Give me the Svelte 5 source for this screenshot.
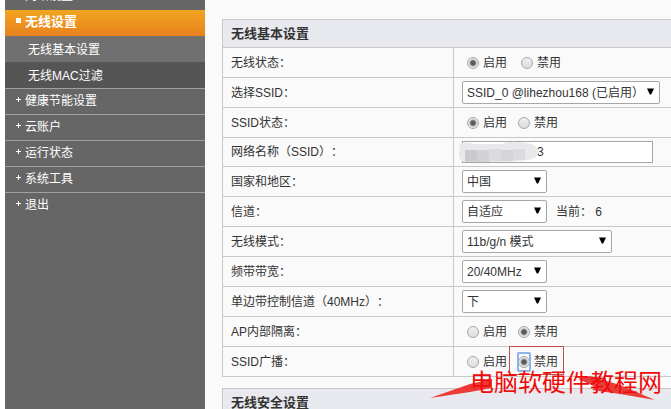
<script lang="ts">
  type Option = { label: string; on: boolean };

  interface Row {
    label: string;
    kind: "radio" | "select" | "text";
    name: string;
    value?: string;
    options?: Option[];
    width?: "short" | "medium" | "long";
    note?: string;
    spaced?: boolean;
    marked?: boolean;
  }

  const menu = ["健康节能设置", "云账户", "运行状态", "系统工具", "退出"];

  const onOff = (enabled: boolean): Option[] => [
    { label: "启用", on: enabled },
    { label: "禁用", on: !enabled },
  ];

  const rows: Row[] = [
    { label: "无线状态：", kind: "radio", name: "wifi", options: onOff(true), spaced: true },
    { label: "选择SSID：", kind: "select", name: "ssid", value: "SSID_0 @lihezhou168 (已启用）", width: "long" },
    { label: "SSID状态：", kind: "radio", name: "ssid-state", options: onOff(true) },
    { label: "网络名称（SSID）：", kind: "text", name: "ssid-name", value: "3" },
    { label: "国家和地区：", kind: "select", name: "country", value: "中国", width: "short" },
    { label: "信道：", kind: "select", name: "channel", value: "自适应", width: "short", note: "当前： 6" },
    { label: "无线模式：", kind: "select", name: "mode", value: "11b/g/n 模式", width: "medium" },
    { label: "频带带宽：", kind: "select", name: "bandwidth", value: "20/40MHz", width: "short" },
    { label: "单边带控制信道（40MHz）：", kind: "select", name: "sideband", value: "下", width: "short" },
    { label: "AP内部隔离：", kind: "radio", name: "isolation", options: onOff(false) },
    { label: "SSID广播：", kind: "radio", name: "broadcast", options: onOff(false), marked: true },
  ];
</script>

<div class="page">
  <nav class="sidebar">
    <ul class="menu">
      <li class="item item--first"><a href="#network"><span class="plus"></span>网络设置</a></li>
      <li class="item item--active"><a href="#wireless"><span class="square"></span>无线设置</a></li>
      <li class="sub sub--current"><a href="#basic">无线基本设置</a></li>
      <li class="sub"><a href="#mac">无线MAC过滤</a></li>
      {#each menu as entry}
        <li class="item"><a href="#menu"><span class="plus"></span>{entry}</a></li>
      {/each}
    </ul>
  </nav>

  <main class="content">
    <table class="settings">
      <thead>
        <tr><th colspan="2">无线基本设置</th></tr>
      </thead>
      <tbody>
        {#each rows as row}
          <tr class:row--text={row.kind === "text"}>
            <td class="name">
              {#if row.kind === "radio"}
                {row.label}
              {:else}
                <label for={row.name}>{row.label}</label>
              {/if}
            </td>
            <td class="value">
              <div class="field" class:field--radio={row.kind === "radio"} class:field--spaced={row.spaced}>
                {#if row.kind === "radio"}
                  {#each row.options ?? [] as option}
                    <label class="option">
                      <input type="radio" name={row.name} value={option.label} checked={option.on} />
                      {option.label}
                      {#if row.marked && option.on}
                        <span class="focus"></span>
                        <span class="frame"></span>
                      {/if}
                    </label>
                  {/each}
                {:else if row.kind === "select"}
                  <span class="select select--{row.width}">
                    <select id={row.name}>
                      <option>{row.value}</option>
                    </select>
                    <svg class="arrow" viewBox="0 0 7 7" aria-hidden="true"><path d="M0 0.5h7L4.2 6.5H2.8z" /></svg>
                  </span>
                  {#if row.note}
                    <span class="note">{row.note}</span>
                  {/if}
                {:else}
                  <span class="text">
                    <input type="text" id={row.name} value={row.value} />
                    <svg class="smudge" viewBox="0 0 82 22" aria-hidden="true">
                      <path fill="#e9e8ea" d="M2 3Q8 0 16 3L44 3Q50 0 60 1Q76 1 81 9Q80 18 70 19L50 21 8 21Q0 20 1 12z" />
                      <path fill="#d3d2d5" d="M7 9h24v12H7z" />
                      <path fill="#cac9cd" d="M7 9h12v11H7z" />
                      <path fill="#dcdbde" d="M31 8h12v12H31zM55 8h12v11H55z" />
                      <path fill="#d6d4d8" d="M43 9h12v11H43z" />
                    </svg>
                  </span>
                {/if}
                {#if row.marked}
                  <div class="watermark">
                    <svg class="strokes" viewBox="0 0 228 30" aria-hidden="true">
                      <path fill="#ee3a36" d="M0 26L40 12 62 7 62 16 40 20z" />
                      <path fill="#e83e3a" d="M148 7L160 4 190 13 225 28 190 22 162 18 166 15z" />
                    </svg>
                    <span class="mark">电脑软硬件教程网</span>
                  </div>
                {/if}
              </div>
            </td>
          </tr>
        {/each}
      </tbody>
    </table>

    <table class="settings">
      <thead>
        <tr><th colspan="2">无线安全设置</th></tr>
      </thead>
    </table>
  </main>
</div>

<style>
  :global(html) {
    height: 100%;
    overflow: hidden;
  }

  :global(body) {
    height: 100%;
    overflow: hidden;
    background: #fafafa;
  }

  .page,
  .page input,
  .page select {
    font-family: "Liberation Sans", "Noto Sans CJK SC", sans-serif;
    font-size: 12px;
    color: #333;
    text-spacing-trim: space-all;
  }

  .page {
    display: flex;
    min-height: 100vh;
    border-left: 5px solid #fff;
  }

  .sidebar {
    flex: 0 0 200px;
    background: #666;
  }

  .menu {
    list-style: none;
    margin: -16px 0 0;
    padding: 0;
  }

  .menu a {
    display: flex;
    align-items: center;
    height: 100%;
    color: #fff;
    text-decoration: none;
  }

  .item,
  .sub {
    box-sizing: border-box;
    height: 26px;
  }

  .item {
    padding: 0 0 5px 11px;
    border-top: 1px solid #a0a0a0;
  }

  .item--first {
    border-top: 0;
  }

  .item--active {
    border-top: 0;
    background: linear-gradient(#f2a51f, #e8811f);
    font-size: 13px;
    font-weight: bold;
  }

  .sub {
    padding: 0 0 2px 23px;
    background: #555;
  }

  .sub--current {
    background: #707070;
  }

  .square {
    width: 5px;
    height: 5px;
    margin-right: 4px;
    background: #fff;
  }

  .plus {
    width: 5px;
    height: 5px;
    margin-right: 4px;
    background:
      linear-gradient(#fff, #fff) center / 5px 1px no-repeat,
      linear-gradient(#fff, #fff) center / 1px 5px no-repeat;
  }

  .content {
    flex: 1;
    min-width: 0;
    padding: 19px 0 0 17px;
  }

  .settings {
    width: 100%;
    margin-bottom: 11px;
    border-collapse: separate;
    border-spacing: 0;
    border-top: 1px solid #c8c8c8;
    border-left: 1px solid #c8c8c8;
  }

  th {
    box-sizing: border-box;
    height: 28px;
    padding: 0 8px;
    border-bottom: 1px solid #c8c8c8;
    background: #e8e9ee;
    font-size: 13px;
    line-height: 20px;
    text-align: left;
  }

  td {
    box-sizing: border-box;
    height: 30px;
    padding: 0 8px;
    border-bottom: 1px solid #c8c8c8;
    line-height: 20px;
  }

  .row--text td {
    height: 29px;
  }

  .name {
    width: 231px;
    border-right: 1px solid #c8c8c8;
    white-space: nowrap;
  }

  .field {
    position: relative;
    display: flex;
    align-items: center;
    gap: 9px;
    white-space: nowrap;
  }

  .field--radio {
    gap: 11px;
    padding-left: 5px;
  }

  .field--spaced {
    gap: 14px;
  }

  .option {
    position: relative;
    display: flex;
    align-items: center;
    gap: 4px;
  }

  input[type="radio"] {
    appearance: none;
    box-sizing: border-box;
    width: 12px;
    height: 12px;
    margin: 0;
    border: 1px solid #a8a8a8;
    border-radius: 50%;
    background: linear-gradient(#f0f0f0, #dcdcdc);
  }

  input[type="radio"]:checked {
    background: radial-gradient(circle, #5a5a5a 0 2px, #e6e6e6 4px);
  }

  .focus {
    position: absolute;
    top: 0;
    left: -1px;
    box-sizing: border-box;
    width: 14px;
    height: 20px;
    border: 2px solid #8db4e8;
    border-radius: 2px;
  }

  .frame {
    position: absolute;
    inset: -6px -6px -3px -9px;
    border: 1px solid #c0504d;
  }

  .select {
    position: relative;
    display: flex;
  }

  .select--short {
    width: 85px;
  }

  .select--medium {
    width: 150px;
  }

  .select--long {
    width: 198px;
  }

  select {
    appearance: none;
    box-sizing: border-box;
    width: 100%;
    height: 23px;
    margin: 0;
    padding: 0 4px;
    border: 1px solid #a6a6a6;
    border-radius: 2px;
    background: #fff;
  }

  .arrow {
    position: absolute;
    top: 7px;
    right: 6px;
    width: 7px;
    height: 7px;
    fill: #000;
    pointer-events: none;
  }

  .text {
    position: relative;
    display: flex;
  }

  input[type="text"] {
    box-sizing: border-box;
    width: 191px;
    height: 22px;
    margin: 0;
    padding: 0 4px 0 74px;
    border: 1px solid #a6a6a6;
    border-radius: 0;
    background: #fff;
  }

  .smudge {
    position: absolute;
    top: 0;
    left: -4px;
    width: 82px;
    height: 22px;
    pointer-events: none;
  }

  .watermark {
    position: absolute;
    top: 16px;
    left: -32px;
    width: 228px;
    height: 30px;
    padding-left: 40px;
    color: #f00b0b;
    font-size: 24px;
    line-height: 30px;
    pointer-events: none;
  }

  .strokes {
    position: absolute;
    top: 4px;
    left: 0;
    width: 228px;
    height: 30px;
  }

  .mark {
    position: relative;
  }
</style>
